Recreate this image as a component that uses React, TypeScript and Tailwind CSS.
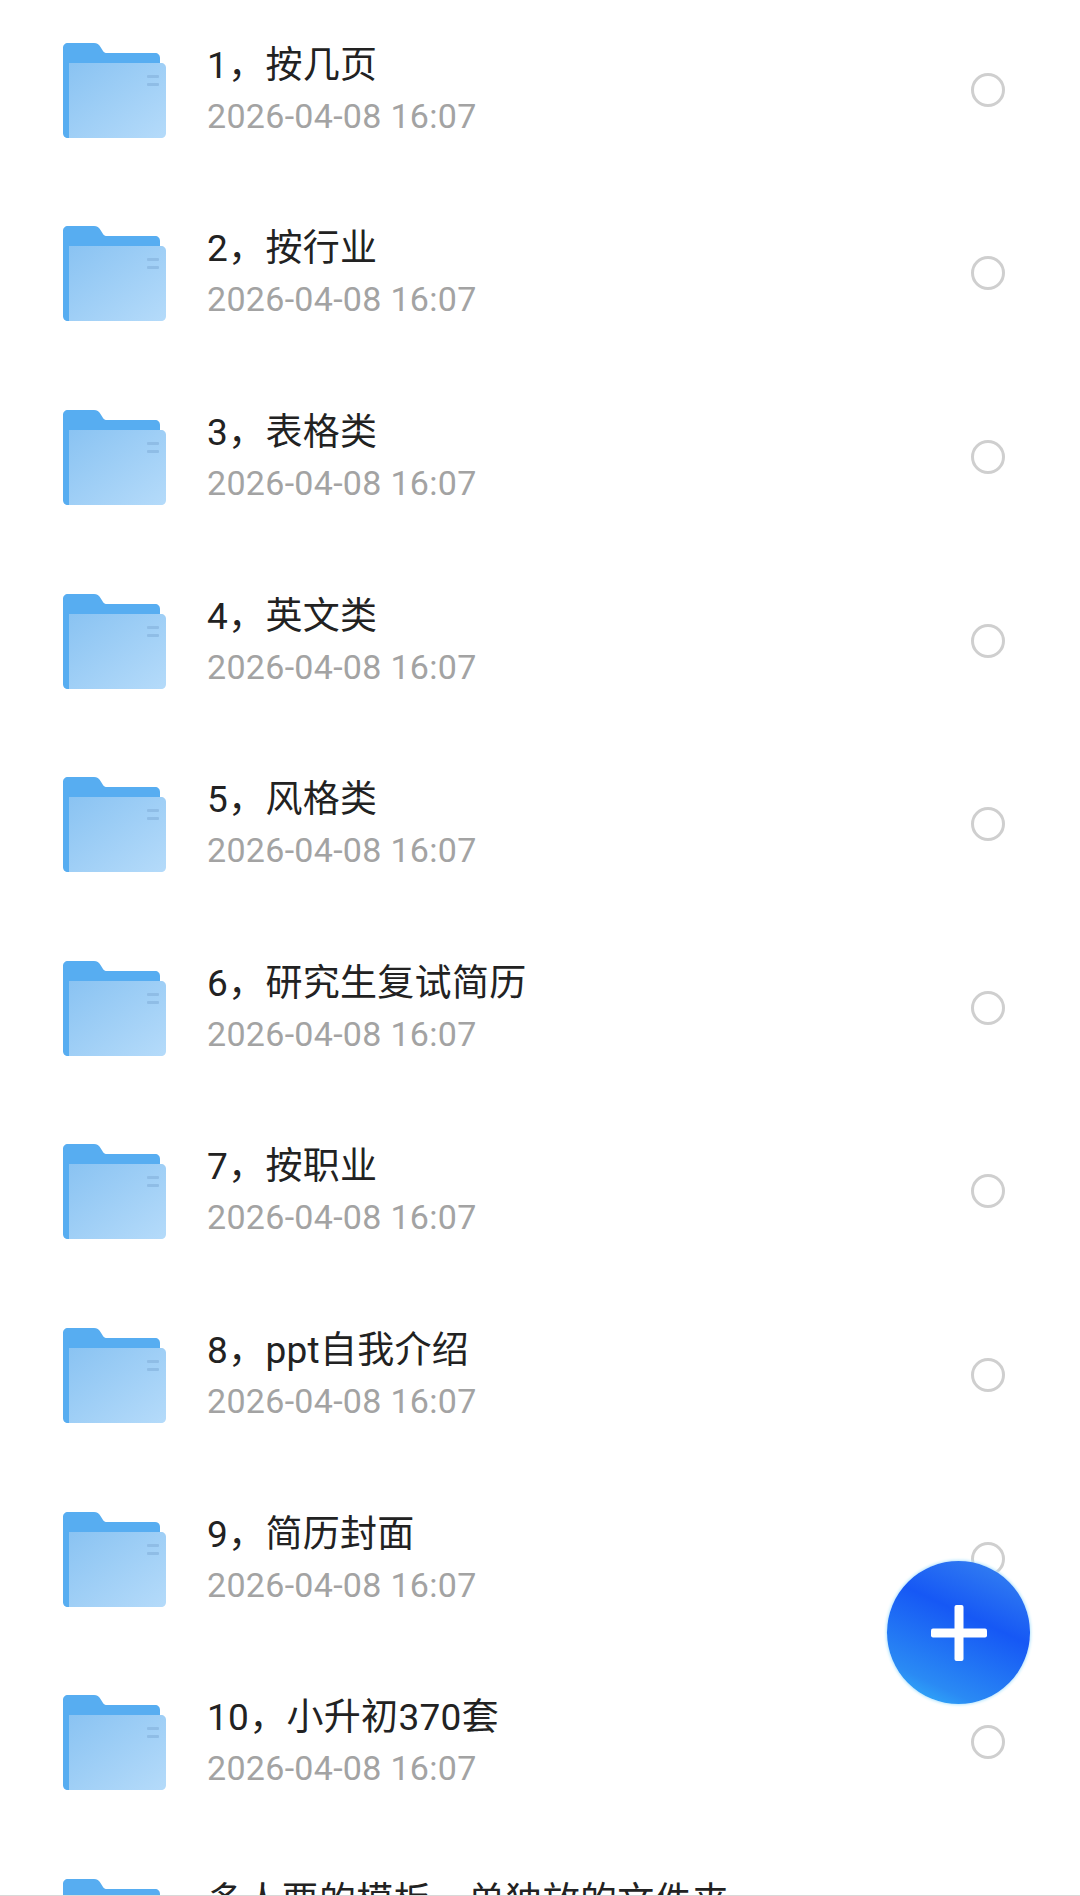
const rows = [
  '1，按几页',
  '2，按行业',
  '3，表格类',
  '4，英文类',
  '5，风格类',
  '6，研究生复试简历',
  '7，按职业',
  '8，ppt自我介绍',
  '9，简历封面',
  '10，小升初370套',
  '多人要的模板，单独放的文件夹',
];

const FolderIcon = ({ id }: { id: number }) => (
  <svg width="104" height="96" viewBox="0 0 104 96" className="shrink-0">
    <defs>
      <linearGradient id={`front-${id}`} x1="0" y1="0" x2="1" y2="1">
        <stop offset="0" stopColor="#8ac3f2" />
        <stop offset="1" stopColor="#b5dbfa" />
      </linearGradient>
    </defs>
    <path
      d="M5 0H31C34 0 36 1.500 37.500 4L40 8C41 9.500 42 10 44 10H92C95 10 97 12 97 15V30H10V95H5C2 95 0 93 0 90V5C0 2 2 0 5 0Z"
      fill="#57adf1"
    />
    <path d="M6 20H98C101 20 103 22 103 25V90C103 93 101 95 98 95H6Z" fill={`url(#front-${id})`} />
    <rect x="84" y="32" width="12" height="3" rx="1" fill="#8fbde6" />
    <rect x="84" y="40" width="12" height="3" rx="1" fill="#8fbde6" />
  </svg>
);

const FileRow = ({ id, name }: { id: number; name: string }) => (
  <div className="flex h-[183.6px] shrink-0 items-center pl-[63px] pr-[75px]">
    <FolderIcon id={id} />
    <div className="ml-[40px] flex min-w-0 flex-1 flex-col">
      <span className="text-[37px] leading-[50px] tracking-[0.3px] text-[#222222]">{name}</span>
      <span className="text-[34px] leading-[50px] tracking-[0.3px] text-[#a3a3a3]">2026-04-08 16:07</span>
    </div>
    <div className="mb-[2px] size-[34px] shrink-0 rounded-full border-[3px] border-[#cfcfcf]"></div>
  </div>
);

const App = () => {
  return (
    <div className="relative h-[1896px] w-[1080px] overflow-hidden bg-white font-['Roboto','Noto_Sans_CJK_SC',sans-serif]">
      <div className="-mt-[1px] flex flex-col">
        {rows.map((name, i) => (
          <FileRow key={name} id={i} name={name} />
        ))}
      </div>
      <div className="absolute left-[887px] top-[1561px] flex size-[143px] items-center justify-center rounded-full bg-[linear-gradient(25deg,#35c0fb_0%,#2a8af4_20%,#1658f5_60%,#3a88f0_100%)] shadow-[0_0_3px_1px_#b5e6fd]">
        <svg width="56" height="56" viewBox="0 0 56 56">
          <rect x="23.500" y="0" width="9" height="56" rx="2" fill="#ffffff" />
          <rect x="0" y="23.500" width="56" height="9" rx="2" fill="#ffffff" />
        </svg>
      </div>
      <div className="absolute bottom-0 left-0 h-px w-full bg-[#d8d8d8]"></div>
    </div>
  );
};

export default App;
